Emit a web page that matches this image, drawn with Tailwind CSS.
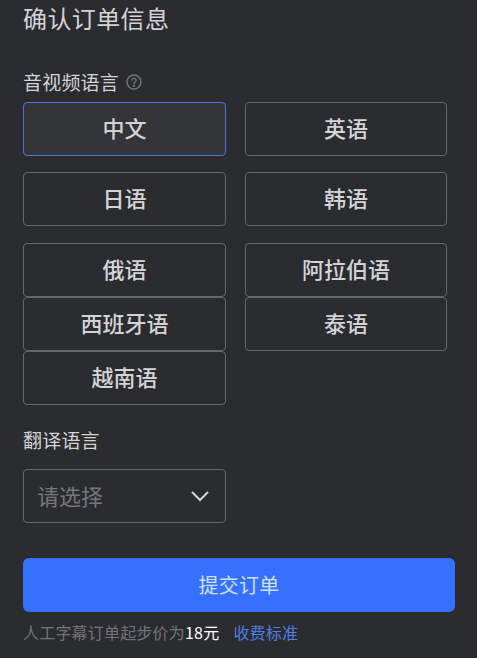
<!DOCTYPE html>
<html lang="zh-CN">
<head>
    <meta charset="UTF-8">
    <title>确认订单信息</title>
    <script src="https://cdn.jsdelivr.net/npm/@tailwindcss/browser@4"></script>
</head>
<body class="bg-[#2b2c30] h-[658px] overflow-hidden font-['Noto_Sans_CJK_SC','Liberation_Sans',sans-serif]">
    <div class="pl-[23px] pr-[22px]">
        <h1 class="text-[24px] tracking-[0.4px] leading-[36px] h-[39px] text-[#d4d4d6] font-normal">确认订单信息</h1>

        <div class="mt-[30px] h-[28px] flex items-center gap-[7px] text-[19px] tracking-[0.2px] leading-[26px] text-[#d4d4d6]">
            <span class="pb-[2px]">音视频语言</span>
            <svg class="w-[16px] h-[16px] mb-[2px]" viewBox="0 0 16 16" fill="none" stroke="#77787c" stroke-width="1.4">
                <circle cx="8" cy="8" r="7"></circle>
                <path d="M5.9 6.3a2.1 2.1 0 1 1 3.3 1.7c-.8.5-1.2.9-1.2 1.8" stroke-linecap="round"></path>
                <circle cx="8" cy="11.8" r=".4" fill="#77787c"></circle>
            </svg>
        </div>

        <div class="mt-[5px] w-[424px] grid grid-cols-[203px_202px] gap-x-[19px] text-[22px] text-[#d4d4d6] font-medium">
            <button class="h-[54px] pb-[4px] rounded-[4px] border border-[#4476e0] bg-[#343539]">中文</button>
            <button class="h-[54px] pb-[4px] rounded-[4px] border border-[#66676b]">英语</button>
            <button class="h-[54px] pb-[4px] mt-[16px] rounded-[4px] border border-[#66676b]">日语</button>
            <button class="h-[54px] pb-[4px] mt-[16px] rounded-[4px] border border-[#66676b]">韩语</button>
            <button class="h-[54px] pb-[4px] mt-[17px] rounded-[4px] border border-[#66676b]">俄语</button>
            <button class="h-[54px] pb-[4px] mt-[17px] rounded-[4px] border border-[#66676b]">阿拉伯语</button>
            <button class="h-[54px] pb-[4px] rounded-[4px] border border-[#66676b]">西班牙语</button>
            <button class="h-[54px] pb-[4px] rounded-[4px] border border-[#66676b]">泰语</button>
            <button class="h-[54px] pb-[4px] rounded-[4px] border border-[#66676b]">越南语</button>
        </div>

        <div class="mt-[21px] h-[29px] text-[19px] tracking-[0.2px] leading-[28px] text-[#d4d4d6]">翻译语言</div>

        <div class="mt-[14px] w-[203px] h-[54px] rounded-[4px] border border-[#66676b] flex items-center justify-between pl-[14px] pr-[15px]">
            <span class="text-[22px] pb-[2px] -ml-[1px] text-[#77787b]">请选择</span>
            <svg class="w-[20px] h-[12px]" viewBox="0 0 20 12" fill="none" stroke="#d4d4d6" stroke-width="2">
                <path d="M2 2l8 8 8-8"></path>
            </svg>
        </div>

        <button class="mt-[35px] w-[432px] h-[54px] rounded-[6px] bg-[#3671fd] text-[20px] tracking-[0.2px] text-[#cfe0ff]">提交订单</button>

        <div class="mt-[8px] flex items-center text-[16px] tracking-[0.2px] leading-[24px] text-[#737478]">
            <span>人工字幕订单起步价为</span><span class="text-white">18元</span>
            <a class="ml-[14px] text-[#4f7fe6]">收费标准</a>
        </div>
    </div>
</body>
</html>
